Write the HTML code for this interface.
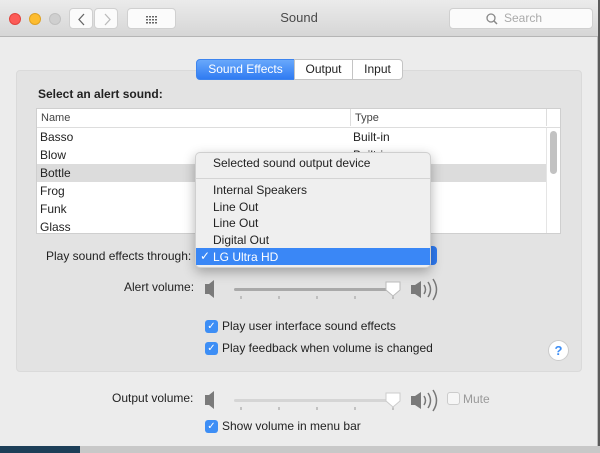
<!DOCTYPE html>
<html><head><meta charset="utf-8"><style>
*{margin:0;padding:0;box-sizing:border-box}
body{width:600px;height:453px;overflow:hidden;background:#5a5a5a;font-family:"Liberation Sans",sans-serif;font-size:12px;color:#222;position:relative}
.a{position:absolute}
.win{left:0;top:0;width:598px;height:446px;background:#ececec;border-right:1px solid #bbb}
.tb{left:0;top:0;width:598px;height:37px;background:linear-gradient(#ebebeb,#d6d6d6);border-bottom:1px solid #b5b5b5}
.dot{width:12px;height:12px;border-radius:50%;top:13px}
.btn{background:#fbfbfb;border:1px solid #d0d0d0;border-radius:4px;height:21px;top:8px}
.box{left:16px;top:70px;width:566px;height:302px;background:#e3e3e3;border:1px solid #dadada;border-radius:4px}
.tab{top:59px;height:21px;border:1px solid #c4c4c4;background:#fff;font-size:12px;line-height:19px;text-align:center}
.row{left:37px;width:509px;height:18px;line-height:18px;padding-left:3px;font-size:12px}
.cb{width:13px;height:13px;border-radius:3px;background:#3d8ef5;color:#fff;font-size:10px;line-height:13px;text-align:center}
.mi{left:213px;font-size:12px}
</style></head><body>
<div class="a win"></div>
<div class="a tb"></div>
<div class="a dot" style="left:9px;background:#fc5b57;border:1px solid #e0443e"></div>
<div class="a dot" style="left:29px;background:#fdbc2f;border:1px solid #dea123"></div>
<div class="a dot" style="left:49px;background:#cfcfcf;border:1px solid #c0c0c0"></div>
<div class="a btn" style="left:69px;width:24px"><svg width="24" height="21"><path d="M14 5l-5 5.5 5 5.5" fill="none" stroke="#666" stroke-width="1.3"/></svg></div>
<div class="a btn" style="left:94px;width:24px"><svg width="24" height="21"><path d="M10 5l5 5.5-5 5.5" fill="none" stroke="#bbb" stroke-width="1.3"/></svg></div>
<div class="a btn" style="left:127px;width:49px"><svg width="49" height="21"><g fill="#666"><rect x="18" y="7" width="2" height="1.5"/><rect x="21" y="7" width="2" height="1.5"/><rect x="24" y="7" width="2" height="1.5"/><rect x="27" y="7" width="2" height="1.5"/><rect x="18" y="10" width="2" height="1.5"/><rect x="21" y="10" width="2" height="1.5"/><rect x="24" y="10" width="2" height="1.5"/><rect x="27" y="10" width="2" height="1.5"/><rect x="18" y="13" width="2" height="1.5"/><rect x="21" y="13" width="2" height="1.5"/><rect x="24" y="13" width="2" height="1.5"/><rect x="27" y="13" width="2" height="1.5"/></g></svg></div>
<div class="a" style="left:0;width:598px;top:10px;text-align:center;font-size:13px;color:#4a4a4a">Sound</div>
<div class="a btn" style="left:449px;width:144px;color:#aaa;font-size:12px;line-height:19px;padding-left:36px"><svg class="a" style="left:36px;top:4px" width="12" height="12"><circle cx="5" cy="5" r="4" fill="none" stroke="#888" stroke-width="1.3"/><line x1="8" y1="8" x2="11" y2="11" stroke="#888" stroke-width="1.5"/></svg><span style="margin-left:18px">Search</span></div>

<div class="a box"></div>
<div class="a tab" style="left:196px;width:99px;background:linear-gradient(#68a8fb,#2f7bf2);color:#fff;border-color:#3d84ee;border-radius:4px 0 0 4px">Sound Effects</div>
<div class="a tab" style="left:294px;width:59px">Output</div>
<div class="a tab" style="left:352px;width:51px;border-radius:0 4px 4px 0">Input</div>
<div class="a" style="left:38px;top:87px;font-weight:bold;font-size:12px">Select an alert sound:</div>

<div class="a" style="left:36px;top:108px;width:525px;height:126px;background:#fff;border:1px solid #cfcfcf"></div>
<div class="a" style="left:37px;top:109px;width:523px;height:19px;border-bottom:1px solid #ddd;font-size:11px;color:#444;line-height:18px"><span style="position:absolute;left:4px">Name</span><span style="position:absolute;left:313px;border-left:1px solid #ddd;padding-left:4px;height:17px">Type</span><span style="position:absolute;left:509px;border-left:1px solid #ddd;height:17px"></span></div>
<div class="a row" style="top:128px">Basso<span class="a" style="left:316px">Built-in</span></div>
<div class="a row" style="top:146px">Blow<span class="a" style="left:316px">Built-in</span></div>
<div class="a row" style="top:164px;background:#dcdcdc">Bottle</div>
<div class="a row" style="top:182px">Frog</div>
<div class="a row" style="top:200px">Funk</div>
<div class="a row" style="top:218px;height:15px;overflow:hidden">Glass</div>
<div class="a" style="left:546px;top:128px;width:1px;height:105px;background:#e5e5e5"></div>
<div class="a" style="left:550px;top:131px;width:7px;height:43px;border-radius:4px;background:#c2c2c2"></div>

<div class="a" style="left:46px;top:249px">Play sound effects through:</div>
<div class="a" style="left:400px;top:246px;width:37px;height:19px;border-radius:4px;background:#2f7bf2"></div>

<div class="a" style="left:195px;top:152px;width:236px;height:116px;background:#efefef;border:1px solid #cfcfcf;border-radius:5px;box-shadow:0 4px 12px rgba(0,0,0,.3)"></div>
<div class="a mi" style="top:156px">Selected sound output device</div>
<div class="a" style="left:196px;top:178px;width:234px;height:1px;background:#d4d4d4"></div>
<div class="a mi" style="top:183px">Internal Speakers</div>
<div class="a mi" style="top:200px">Line Out</div>
<div class="a mi" style="top:216px">Line Out</div>
<div class="a mi" style="top:233px">Digital Out</div>
<div class="a" style="left:196px;top:248px;width:234px;height:17px;background:#3a87f6"></div>
<div class="a" style="left:200px;top:249px;color:#fff">&#10003;</div>
<div class="a mi" style="top:250px;color:#fff">LG Ultra HD</div>

<div class="a" style="left:124px;top:280px">Alert volume:</div>
<div class="a" style="left:112px;top:391px">Output volume:</div>
<svg class="a" style="left:200px;top:276px" width="250" height="30">
<path d="M5 8h4l5-4v18l-5-4H5z" fill="#7a7a7a"/>
<rect x="34" y="12" width="160" height="3" rx="1.5" fill="#a9a9a9"/>
<g fill="#999"><rect x="40.5" y="20" width="1" height="3"/><rect x="78.5" y="20" width="1" height="3"/><rect x="116.5" y="20" width="1" height="3"/><rect x="154.5" y="20" width="1" height="3"/><rect x="192.5" y="20" width="1" height="3"/></g>
<path d="M186 6h14v8l-7 6-7-6z" fill="#fff" stroke="#bbb"/>
<path d="M211 9h4l6-4v17l-6-4h-4z" fill="#7a7a7a"/>
<path d="M224 9q3 4.5 0 9M228 6q5 7.5 0 15M233 3q7 10.5 0 21" fill="none" stroke="#777" stroke-width="1.5"/>
</svg>
<svg class="a" style="left:200px;top:387px" width="250" height="30">
<path d="M5 8h4l5-4v18l-5-4H5z" fill="#7a7a7a"/>
<rect x="34" y="12" width="160" height="3" rx="1.5" fill="#d5d5d5"/>
<g fill="#999"><rect x="40.5" y="20" width="1" height="3"/><rect x="78.5" y="20" width="1" height="3"/><rect x="116.5" y="20" width="1" height="3"/><rect x="154.5" y="20" width="1" height="3"/><rect x="192.5" y="20" width="1" height="3"/></g>
<path d="M186 6h14v8l-7 6-7-6z" fill="#fff" stroke="#ccc"/>
<path d="M211 9h4l6-4v17l-6-4h-4z" fill="#7a7a7a"/>
<path d="M224 9q3 4.5 0 9M228 6q5 7.5 0 15M233 3q7 10.5 0 21" fill="none" stroke="#777" stroke-width="1.5"/>
</svg>
<div class="a cb" style="left:205px;top:320px">&#10003;</div>
<div class="a" style="left:222px;top:319px">Play user interface sound effects</div>
<div class="a cb" style="left:205px;top:342px">&#10003;</div>
<div class="a" style="left:222px;top:341px">Play feedback when volume is changed</div>
<div class="a" style="left:548px;top:340px;width:21px;height:21px;border-radius:50%;background:#fff;border:1px solid #ccc;color:#3d8ef5;font-weight:bold;text-align:center;line-height:19px;font-size:13px">?</div>
<div class="a" style="left:447px;top:392px;width:13px;height:13px;border:1px solid #ccc;border-radius:3px;background:#f6f6f6"></div>
<div class="a" style="left:463px;top:392px;color:#999">Mute</div>
<div class="a cb" style="left:205px;top:420px">&#10003;</div>
<div class="a" style="left:222px;top:419px">Show volume in menu bar</div>
<div class="a" style="left:0;top:446px;width:80px;height:7px;background:#1d3f58"></div>
<div class="a" style="left:80px;top:446px;width:520px;height:7px;background:#c8c8c8"></div>
</body></html>
